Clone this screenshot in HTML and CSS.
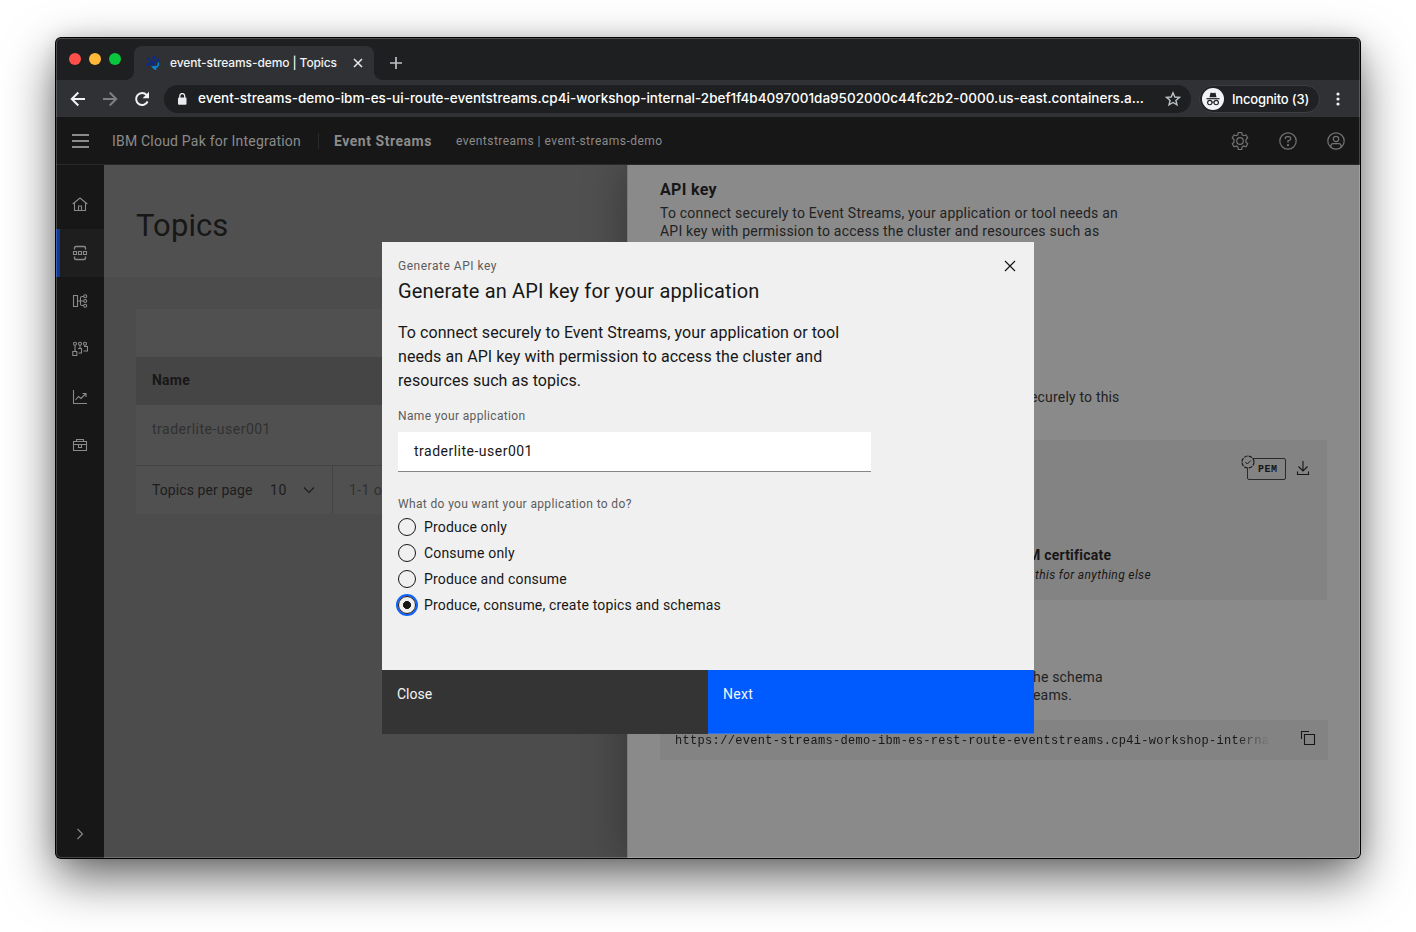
FILE: index.html
```html
<!DOCTYPE html>
<html lang="en">
<head>
<meta charset="utf-8">
<title>event-streams-demo | Topics</title>
<link rel="stylesheet" href="styles.css">
</head>
<body>
<div class="window">
  <div class="tabstrip">
    <div class="lights"><i class="light red"></i><i class="light amber"></i><i class="light green"></i></div>
    <div class="tab">
      <svg class="favicon" width="14" height="14" viewBox="0 0 14 14" fill="none"><g stroke="#0d2c86" stroke-width="1.300"><path d="M2.500 3L6 7M8 2L6.500 7M11.500 4L7 7M2 8.500L7 7.500"/><circle cx="2.300" cy="3" r="1"/><circle cx="8" cy="1.600" r="1"/><circle cx="11.800" cy="3.800" r="1"/><circle cx="1.800" cy="8.500" r="1"/><circle cx="7" cy="7.500" r="1.500"/></g><path d="M12.300 6.500q1 4-3.300 5.500M6.500 11l3-.5v3z" stroke="#0a86d8" stroke-width="1.400"/></svg>
      <span class="tab-title">event-streams-demo | Topics</span>
      <svg class="tab-close" width="10" height="10" viewBox="0 0 10 10" stroke="#e8eaed" stroke-width="1.500"><path d="M1 1l8 8M9 1l-8 8"/></svg>
    </div>
    <svg class="newtab" width="12" height="12" viewBox="0 0 12 12" stroke="#bdc1c6" stroke-width="1.700"><path d="M6 0v12M0 6h12"/></svg>
  </div>
  <div class="toolbar">
    <svg width="16" height="16" viewBox="0 0 16 16" fill="none" stroke="#f1f3f4" stroke-width="2"><path d="M15 8H2M8.300 1.500L1.800 8l6.500 6.500"/></svg>
    <svg width="16" height="16" viewBox="0 0 16 16" fill="none" stroke="#7d7f83" stroke-width="2"><path d="M1 8h13M7.700 1.500L14.200 8l-6.500 6.500"/></svg>
    <svg width="16" height="16" viewBox="0 0 16 16" fill="none"><path d="M13.600 10.500A6 6 0 1 1 12.600 4" stroke="#f1f3f4" stroke-width="2"/><path d="M15 .8v6.400H8.600z" fill="#f1f3f4"/></svg>
    <div class="omnibox">
      <svg width="10" height="12" viewBox="0 0 10 12"><rect x="1" y="4.500" width="8.500" height="7.300" rx="1" fill="#e8eaed"/><path d="M2.800 5V3a2.450 2.450 0 0 1 4.900 0v2" fill="none" stroke="#e8eaed" stroke-width="1.300"/></svg>
      <span class="url">event-streams-demo-ibm-es-ui-route-eventstreams.cp4i-workshop-internal-2bef1f4b4097001da9502000c44fc2b2-0000.us-east.containers.a...</span>
      <svg class="star" width="16" height="16" viewBox="0 0 16 16" fill="none" stroke="#bdc1c6" stroke-width="1.400"><path d="M8 1.800l1.800 4.200 4.600.4-3.500 3 1.100 4.500L8 11.500l-4 2.400 1.100-4.500-3.500-3 4.600-.4z"/></svg>
    </div>
    <div class="profile">
      <svg width="22" height="22" viewBox="0 0 22 22"><circle cx="11" cy="11" r="11" fill="#f1f3f4"/><path d="M7.500 9.300l1-4.500h1.200l1.300.5 1.300-.5h1.200l1 4.500z" fill="#202124"/><path d="M4.500 10.700h13" stroke="#202124" stroke-width="1.200"/><g fill="none" stroke="#202124" stroke-width="1.100"><circle cx="7.800" cy="14.600" r="2.200"/><circle cx="14.200" cy="14.600" r="2.200"/><path d="M10 14.300q1-.7 2 0"/></g></svg>
      <span class="incog">Incognito (3)</span>
    </div>
    <svg class="dots" width="4" height="14" viewBox="0 0 4 14" fill="#f1f3f4"><circle cx="2" cy="2" r="1.600"/><circle cx="2" cy="7" r="1.600"/><circle cx="2" cy="12" r="1.600"/></svg>
  </div>
  <header class="apphead">
    <svg class="burger" width="17" height="14" viewBox="0 0 17 14" stroke="#8b8b8b" stroke-width="1.800"><path d="M0 1h17M0 7h17M0 13h17"/></svg>
    <span class="suite">IBM Cloud Pak for Integration</span>
    <span class="product">Event Streams</span>
    <span class="crumb">eventstreams | event-streams-demo</span>
    <div class="headicons">
      <svg width="20" height="20" viewBox="0 0 20 20" fill="none" stroke="#747474" stroke-width="1.200"><circle cx="10" cy="10" r="3.300"/><path d="M8.300 1.500h3.400l.5 2.300 1.500.9 2.300-.8 1.700 2.900-1.700 1.600v2.900l1.700 1.600-1.700 2.900-2.300-.8-1.500.9-.5 2.600H8.300l-.5-2.600-1.500-.9-2.300.8-1.700-2.900L4 11.300V8.500L2.300 6.800 4 3.900l2.300.8 1.500-.9z"/></svg>
      <svg width="20" height="20" viewBox="0 0 20 20" fill="none" stroke="#747474" stroke-width="1.200"><circle cx="10" cy="10" r="8.200"/><path d="M7.300 8V7.500Q7.300 5.700 9.300 5.700h1.300q2.100 0 2.100 1.900T10.600 9.500H10v2.200"/><circle cx="10" cy="14.200" r=".5" fill="#747474"/></svg>
      <svg width="20" height="20" viewBox="0 0 20 20" fill="none" stroke="#747474" stroke-width="1.200"><circle cx="10" cy="10" r="8.200"/><circle cx="10" cy="8" r="2.700"/><path d="M5 16.300v-1.600q0-2 2-2h6q2 0 2 2v1.600"/></svg>
    </div>
  </header>
  <div class="appbody">
    <nav class="side">
      <div class="navitem"><svg width="16" height="16" viewBox="0 0 16 16"><path d="M.7 7L8 1l7.300 6M2.500 5.700v7.800h11V5.700M6.500 13.500V9h3v4.500"/></svg></div>
      <div class="navitem active"><svg width="16" height="16" viewBox="0 0 16 16"><path d="M2.500 4.500V3q0-1.500 1.500-1.500h8q1.500 0 1.500 1.500v1.500M2.500 11.500V13q0 1.500 1.500 1.500h8q1.500 0 1.500-1.500v-1.500" stroke-width="1.400"/><path d="M1.500 6.500h3v3h-3zM6.500 6.500h3v3h-3zM11.500 6.500h3v3h-3z"/></svg></div>
      <div class="navitem"><svg width="16" height="16" viewBox="0 0 16 16"><path d="M1.500 2.500h4v11h-4zM5.500 8H12M12 3.500H10Q8.500 3.500 8.500 5v6q0 1.500 1.500 1.500h2"/><circle cx="13.200" cy="3.200" r="1.500"/><circle cx="13.200" cy="8" r="1.500"/><circle cx="13.200" cy="12.800" r="1.500"/></svg></div>
      <div class="navitem"><svg width="16" height="16" viewBox="0 0 16 16"><circle cx="3" cy="2.800" r="1.500"/><circle cx="8" cy="2.800" r="1.500"/><circle cx="13" cy="2.800" r="1.500"/><path d="M3 4.300v6.200M8 4.300V7.500M13 4.300v1.200M.8 10.500h4v4h-4zM6 7.500h3.500v4.500H6.500M12 5.500h3.500v4.500H11.500"/></svg></div>
      <div class="navitem"><svg width="16" height="16" viewBox="0 0 16 16"><path d="M1.500 1v13.500H15M3.500 11l3-3.500 2.500 2L14 4.500M10.500 4.500H14V8"/></svg></div>
      <div class="navitem"><svg width="16" height="16" viewBox="0 0 16 16"><path d="M1.500 4.500h13v9h-13zM4.500 4.500v-2h7v2M1.500 7.500h13M6.500 7.500h3v3h-3z"/></svg></div>
      <div class="navitem expand"><svg width="16" height="16" viewBox="0 0 16 16"><path d="M5.500 3l5 5-5 5"/></svg></div>
    </nav>
    <main class="main">
      <div class="pagehead"><h1>Topics</h1></div>
      <div class="table">
        <div class="tools"></div>
        <div class="thead">Name</div>
        <div class="trow">traderlite-user001</div>
        <div class="pager">
          <div class="perpage"><span class="pp">Topics per page</span><span class="ten">10</span><svg width="12" height="8" viewBox="0 0 12 8" fill="none" stroke="#1d1d1d" stroke-width="1.100"><path d="M1 1.500l5 5 5-5"/></svg></div>
          <div class="range">1-1 o</div>
        </div>
      </div>
    </main>
    <aside class="panel">
      <h2>API key</h2>
      <p class="intro">To connect securely to Event Streams, your application or tool needs an<br>API key with permission to access the cluster and resources such as</p>
      <p class="tail tail-a">ecurely to this</p>
      <div class="certcard">
        <div class="certicons">
          <div class="pem"><svg class="seal" width="14" height="14" viewBox="0 0 14 14" fill="#838383" stroke="#1c1c1c"><circle cx="7" cy="7" r="6" stroke-width="1.200" stroke-dasharray="3.700 1"/><path d="M4.300 7l2 2 3.500-3.500" fill="none"/></svg><span>PEM</span></div>
          <svg width="14" height="16" viewBox="0 0 14 16" fill="none" stroke="#171717" stroke-width="1.100"><path d="M7 1v9.500M2.500 6.500L7 11l4.500-4.500M1.500 11.500v3h11v-3"/></svg>
        </div>
        <div class="certname">M certificate</div>
        <div class="certnote">this for anything else</div>
      </div>
      <p class="tail tail-b">he schema<br>eams.</p>
      <div class="codebox">
        <code>https://event-streams-demo-ibm-es-rest-route-eventstreams.cp4i-workshop-interna</code>
        <svg width="16" height="16" viewBox="0 0 16 16" fill="none" stroke="#171717" stroke-width="1.100"><path d="M4.500 4.500h10v10h-10zM1.500 9V1.500H9"/></svg>
      </div>
    </aside>
  </div>
  <div class="modal" role="dialog">
    <div class="modal-body">
      <svg class="modal-close" width="12" height="12" viewBox="0 0 12 12" stroke="#171717" stroke-width="1.200"><path d="M1 1l10 10M11 1L1 11"/></svg>
      <div class="eyebrow">Generate API key</div>
      <h3>Generate an API key for your application</h3>
      <p class="desc">To connect securely to Event Streams, your application or tool<br>needs an API key with permission to access the cluster and<br>resources such as topics.</p>
      <div class="label namelabel">Name your application</div>
      <div class="field">traderlite-user001</div>
      <div class="label asklabel">What do you want your application to do?</div>
      <div class="radios">
        <div class="radio"><i></i><span>Produce only</span></div>
        <div class="radio"><i></i><span>Consume only</span></div>
        <div class="radio"><i></i><span>Produce and consume</span></div>
        <div class="radio checked"><i></i><span>Produce, consume, create topics and schemas</span></div>
      </div>
    </div>
    <div class="actions"><div class="btn close">Close</div><div class="btn next">Next</div></div>
  </div>
</div>
</body>
</html>
```
FILE: styles.css
```css
* { box-sizing: border-box; }
body { margin: 0; width: 1416px; height: 932px; overflow: hidden; background: #fff; font: 14px Roboto, "Liberation Sans", sans-serif; color: #171717; white-space: nowrap; }
h1, h2, h3, p { margin: 0; font-weight: 400; }
svg { display: block; flex: none; }

.window { position: relative; display: flex; flex-direction: column; width: 1304px; height: 820px; margin: 38px 0 0 56px; border-radius: 5px; background: #171717; box-shadow: 0 0 0 1px #000, 0 19px 50px rgba(0,0,0,.62), 0 0 18px rgba(0,0,0,.12); }
.window::after { content: ""; position: absolute; inset: 0; border-radius: 5px; box-shadow: inset 0 0 0 1px rgba(255,255,255,.2); pointer-events: none; }

.tabstrip { display: flex; height: 42px; border-radius: 5px 5px 0 0; background: #1e1f21; }
.lights { display: flex; gap: 8px; padding: 15px 0 0 13px; width: 78px; }
.light { width: 12px; height: 12px; border-radius: 50%; }
.red { background: #ff4f4b; }
.amber { background: #ffb838; }
.green { background: #0ac63f; }
.tab { position: relative; display: flex; align-items: center; width: 240px; margin-top: 8px; padding: 0 11px 0 12px; border-radius: 8px 8px 0 0; background: #303135; }
.tab::before, .tab::after { content: ""; position: absolute; bottom: 0; width: 8px; height: 8px; }
.tab::before { left: -8px; background: radial-gradient(circle at 0 0, transparent 7.500px, #303135 8px); }
.tab::after { right: -8px; background: radial-gradient(circle at 100% 0, transparent 7.500px, #303135 8px); }
.tab-title { flex: 1; padding: 0 0 2px 10px; font: 500 12px Inter, sans-serif; letter-spacing: -.1px; color: #f1f3f4; }
.newtab { margin: 19px 0 0 16px; }

.toolbar { display: flex; align-items: center; height: 37px; padding: 0 20px 0 14px; gap: 16px; background: #303135; }
.omnibox { display: flex; align-items: center; width: 1027px; height: 28px; margin-left: -2px; padding: 0 10px 0 13px; border-radius: 14px; background: #1e1f21; }
.url { flex: 1; padding: 0 0 2px 11px; font: 500 13.500px Inter, sans-serif; letter-spacing: .006px; color: #fff; }
.profile { display: flex; align-items: center; gap: 8px; width: 121px; height: 28px; margin-left: -8px; padding-left: 2px; border: 1px solid #3d3e42; border-radius: 14px; background: #202124; font: 500 13px Inter, sans-serif; letter-spacing: -.17px; color: #fff; }

.apphead { display: flex; align-items: center; height: 48px; padding: 0 14px 0 16px; border-bottom: 1px solid #292929; color: #8b8b8b; }
.suite { width: 207px; margin-left: 23px; border-right: 1px solid #292929; letter-spacing: .206px; }
.product { width: 137px; padding-left: 15px; font-weight: 700; letter-spacing: .534px; }
.crumb { font-size: 12px; letter-spacing: .462px; }
.headicons { display: flex; gap: 28px; margin-left: auto; }

.appbody { display: flex; flex: 1; min-height: 0; overflow: hidden; border-radius: 0 0 5px 5px; }
.side { display: flex; flex-direction: column; width: 48px; padding-top: 16px; background: #171717; }
.navitem { display: flex; align-items: center; justify-content: center; height: 48px; }
.navitem svg { fill: none; stroke: #8a8a8a; stroke-width: 1.1; }
.active { background: #1e1e1e; box-shadow: inset 4px 0 #0c3a96; }
.expand { margin-top: auto; }

.main { width: 523px; background: #4c4c4c; }
.pagehead { height: 112px; padding: 41px 0 0 32px; background: #505050; }
h1 { font-size: 31px; line-height: 40px; letter-spacing: .1px; }
.table { margin: 32px 0 0 32px; background: #505050; line-height: 48px; }
.tools { height: 48px; }
.thead { height: 48px; padding-left: 16px; background: #454545; font-weight: 700; line-height: 46px; letter-spacing: .234px; }
.trow { height: 61px; padding-left: 16px; border-bottom: 1px solid #444; color: #303030; letter-spacing: .492px; }
.pager { display: flex; height: 48px; }
.perpage { display: flex; align-items: center; width: 197px; padding-left: 16px; border-right: 1px solid #444; color: #1d1d1d; }
.pp { width: 118px; letter-spacing: .085px; }
.ten { width: 33px; letter-spacing: .6px; }
.range { padding-left: 16px; color: #303030; letter-spacing: .388px; }

.panel { position: relative; flex: 1; padding: 15px 0 0 32px; border-left: 1px solid #7a7a7a; background: #8a8a8a; box-shadow: -6px 0 36px rgba(0,0,0,.25); }
h2 { font-size: 16px; line-height: 20px; font-weight: 700; letter-spacing: .328px; }
.intro { margin-top: 4px; line-height: 18px; letter-spacing: .218px; color: #222; }
.intro::first-line { letter-spacing: .218px; }
.tail { line-height: 18px; padding-left: 370px; color: #222; letter-spacing: .18px; }
.tail-a { margin-top: 148px; }
.certcard { width: 667px; height: 160px; margin-top: 34px; padding: 16px 17px 0 0; background: #838383; }
.certicons { display: flex; justify-content: flex-end; align-items: center; gap: 10px; }
.pem { position: relative; width: 39px; height: 22px; margin-top: 2px; border: 1px solid #2a2a2a; border-radius: 2px; padding-left: 10px; font: 700 10px/22px "Liberation Mono", monospace; letter-spacing: .5px; }
.seal { position: absolute; left: -7px; top: -4px; }
.certname { margin-top: 66px; padding-left: 368px; line-height: 18px; font-weight: 700; letter-spacing: .221px; }
.certnote { padding-left: 375px; margin-top: 3px; font-size: 12px; line-height: 16px; font-style: italic; letter-spacing: .364px; }
.tail-b { margin-top: 68px; padding-left: 373px; }
.codebox { display: flex; align-items: center; width: 668px; height: 40px; margin-top: 16px; padding: 0 12px 4px 15px; background: #838383; justify-content: space-between; }
code { width: 596px; padding-top: 5px; font: 12px "Liberation Mono", monospace; letter-spacing: .32px; -webkit-mask-image: linear-gradient(90deg, #000 94%, transparent); mask-image: linear-gradient(90deg, #000 94%, transparent); }

.modal { position: absolute; left: 326px; top: 204px; display: flex; flex-direction: column; width: 652px; height: 492px; background: #f0f0f0; }
.modal-body { position: relative; flex: 1; padding: 16px; }
.modal-close { position: absolute; right: 18px; top: 18px; }
.eyebrow, .label { font-size: 12px; line-height: 16px; letter-spacing: .36px; color: #5c5c5c; }
.eyebrow { letter-spacing: .517px; }
h3 { margin-top: 3px; font-size: 20px; line-height: 28px; letter-spacing: .165px; }
.desc { margin-top: 16px; font-size: 16px; line-height: 24px; letter-spacing: .065px; }
.namelabel { margin-top: 15px; }
.field { width: 473px; height: 40px; margin-top: 8px; padding-left: 16px; border-bottom: 1px solid #868686; background: #fff; line-height: 39px; letter-spacing: .492px; }
.asklabel { margin-top: 24px; }
.radios { margin-top: 2px; letter-spacing: .17px; }
.radio { display: flex; align-items: center; height: 26px; gap: 8px; }
.radio i { width: 18px; height: 18px; border: 1px solid #171717; border-radius: 50%; }
.checked i { box-shadow: 0 0 0 2px #0f62fe; background: radial-gradient(circle, #171717 3.700px, transparent 4.300px); }
.actions { display: flex; height: 64px; color: #f4f4f4; line-height: 48px; }
.btn { flex: 1; padding-left: 15px; }
.close { background: #343434; }
.next { background: #005bff; border-bottom: 1px solid #2f74f0; letter-spacing: .266px; }
```
